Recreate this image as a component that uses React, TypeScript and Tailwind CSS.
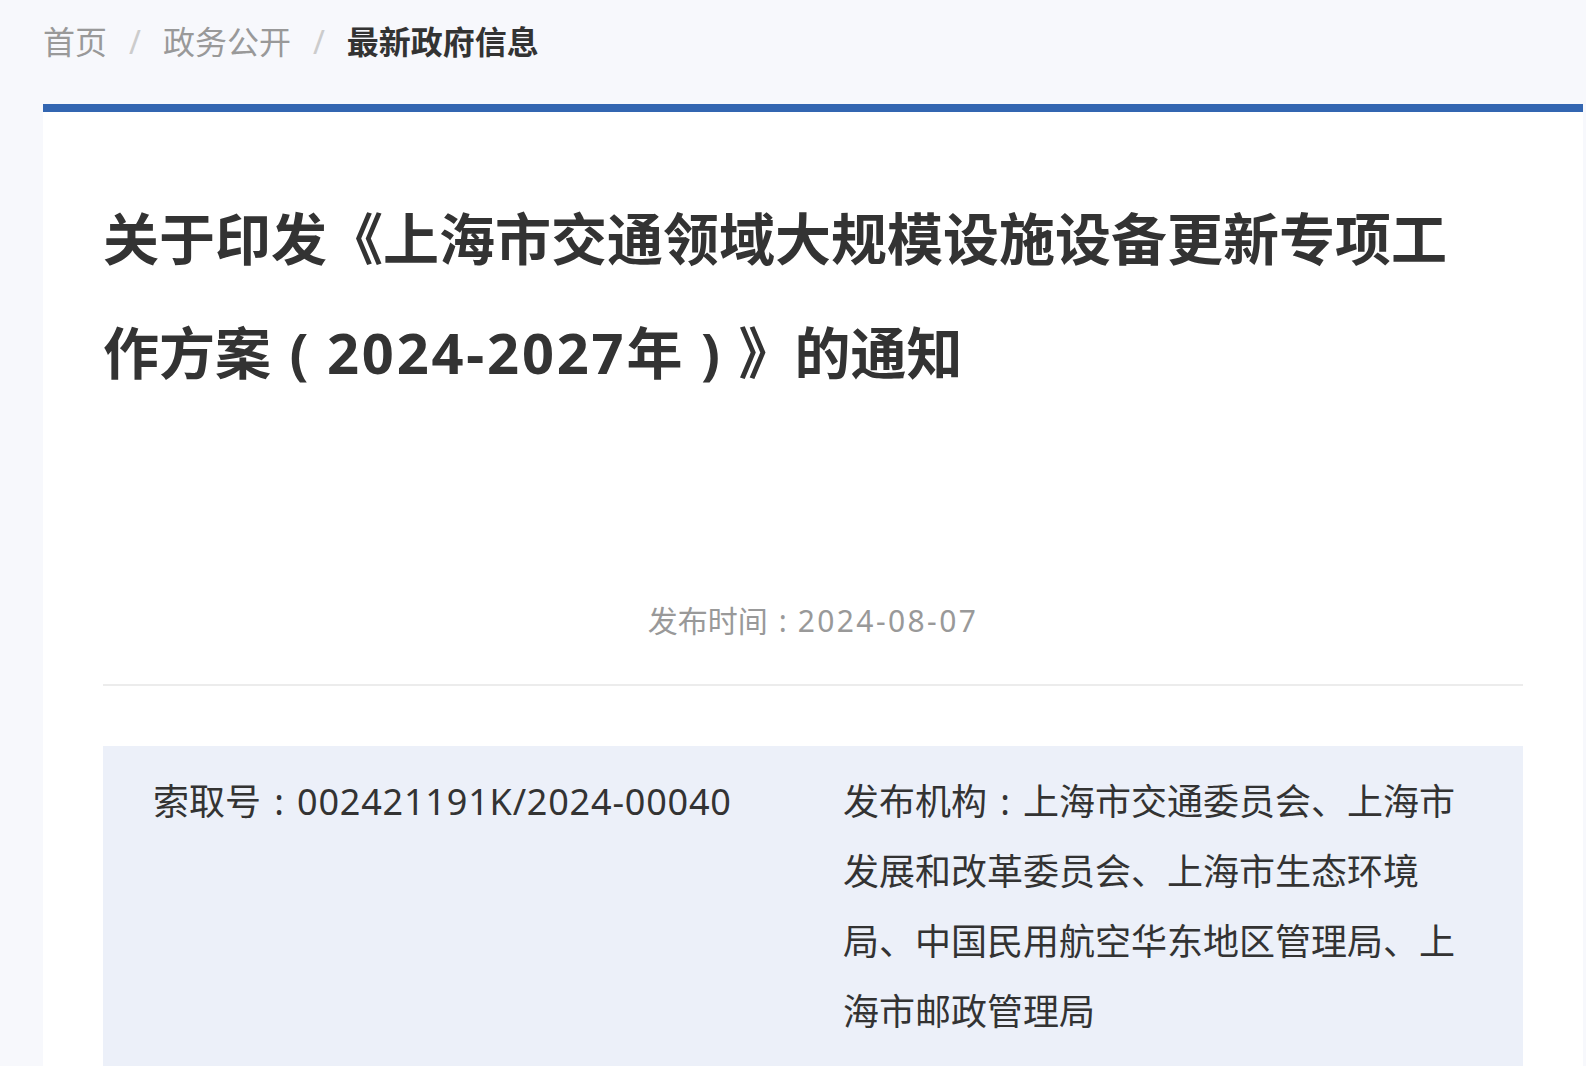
const Cell = ({ children }: { children: string }) => (
  <span className="inline-block w-[1em] text-center">{children}</span>
);

export default function App() {
  const font = {
    fontFamily: '"Noto Sans", "Noto Sans CJK SC", sans-serif',
  };
  return (
    <div
      style={font}
      className="min-h-screen bg-[#f7f8fc] pl-[43px] pr-[3px] text-[#333] [text-spacing-trim:space-all]"
    >
      {/* breadcrumb */}
      <div className="flex h-[104px] items-start pt-[18px] text-[32px] leading-[48px]">
        <span className="text-[#999]">首页</span>
        <span className="px-[22px] text-[#ccc]">/</span>
        <span className="text-[#999]">政务公开</span>
        <span className="px-[22px] text-[#ccc]">/</span>
        <span className="font-bold text-[#333]">最新政府信息</span>
      </div>

      <div className="border-t-[8px] border-[#3366b1] bg-white px-[60px] pt-[69px]">
        <h1 className="max-w-[1380px] text-[56px] font-bold leading-[114px] text-[#333]">
          关于印发《上海市交通领域大规模设施设备更新专项工作方案<Cell>(</Cell>
          <span className="tracking-[0.05em]">2024-2027</span>年<Cell>)</Cell>
          <span className="inline-block w-[1em]">》</span>的通知
        </h1>

        <div className="mt-[192px] text-center text-[30px] leading-[40px] text-[#999]">
          发布时间<Cell>:</Cell>
          <span className="tracking-[0.08em]">2024-08-07</span>
        </div>

        <div className="mt-[43px] h-[2px] bg-[#ececec]" />

        <div className="mt-[60px] flex bg-[#ecf0f9] px-[20px] pb-[24px] pt-[21px] text-[36px] leading-[70px] text-[#333]">
          <div className="w-1/2 px-[30px]">
            索取号<Cell>:</Cell>
            <span className="tracking-[0.8px]">002421191K/2024-00040</span>
          </div>
          <div className="w-1/2 px-[30px]">
            发布机构<Cell>:</Cell>上海市交通委员会、上海市发展和改革委员会、上海市生态环境局、中国民用航空华东地区管理局、上海市邮政管理局
          </div>
        </div>
      </div>
    </div>
  );
}
